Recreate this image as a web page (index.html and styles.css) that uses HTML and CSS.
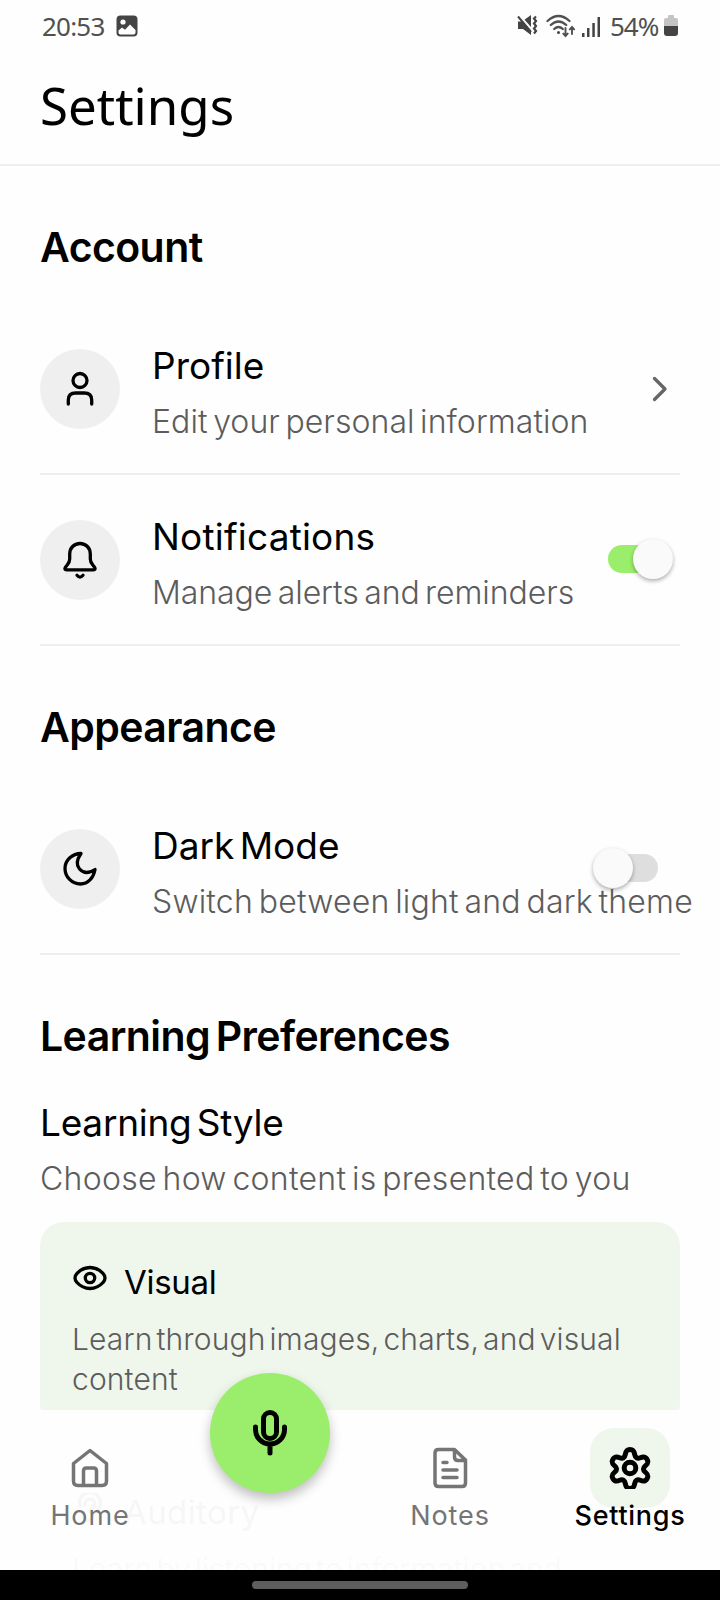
FILE: index.html
```html
<!DOCTYPE html>
<html lang="en">
<head>
<meta charset="utf-8">
<title>Settings</title>
<link rel="stylesheet" href="styles.css">
</head>
<body>
<div class="phone">
  <div class="status">
    <span class="clock">20:53</span>
    <svg class="photo" width="22" height="22" viewBox="0 0 22 22"><rect x=".5" y=".5" width="21" height="21" rx="4" fill="#444"/><circle cx="7" cy="7" r="2.6" fill="#fff"/><path d="M2.500 15.500 6 12.500l3 2.300 5-5.300 5.500 5.500v2.500q0 2-2 2h-13q-2 0-2-2z" fill="#fff"/></svg>
    <span class="spacer"></span>
    <svg class="mute" width="22" height="22" viewBox="0 0 22 22"><path d="M1 6.500h4L14 0v20l-8-6H1z" fill="#444"/><path d="M2 0 15.500 15.500" stroke="#fefefe" stroke-width="2.200"/><path d="M1 1.500 14 17" stroke="#444" stroke-width="2"/><path d="M19 1.500l-2 2 2 2.500-2 2.500 2 2.500-2 2.500 2 2.500-2 2.500" fill="none" stroke="#444" stroke-width="2.200"/></svg>
    <svg class="wifi" width="29" height="24" viewBox="0 0 29 24" fill="none" stroke="#505050" stroke-width="2.300" stroke-linecap="round"><path d="M1.500 7q11-10 22 0M4.800 11q7.700-7 15.400 0M8.200 15q4.300-4 8.600 0"/><circle cx="12.500" cy="18.500" r="1.500" fill="#444" stroke="none"/><path d="M19.500 14v8m-2.200-2.400 2.200 2.400 2.200-2.400M26 20v-7m-2.200 2.400L26 13l2.200 2.400" stroke-width="1.900"/></svg>
    <svg class="signal" width="19" height="21" viewBox="0 0 19 21" fill="#444"><rect x="0" y="16" width="2.500" height="4"/><rect x="5" y="11" width="2.500" height="9"/><rect x="10.300" y="6" width="2.500" height="14"/><rect x="15.500" y="0" width="2.500" height="20"/></svg>
    <span class="percent">54%</span>
    <svg class="battery" width="14" height="22" viewBox="0 0 14 22"><path d="M4 3V1q0-1 1-1h4q1 0 1 1v2h2q2 0 2 2v6H0V5q0-2 2-2z" fill="#c4c4c4"/><path d="M0 11h14v7q0 3-3 3H3q-3 0-3-3z" fill="#444"/></svg>
  </div>
  <header class="header"><h1 class="title">Settings</h1></header>

  <main class="content">
    <section>
      <h2 class="heading">Account</h2>
      <div class="row">
        <div class="avatar"><svg width="40" height="40" viewBox="0 0 40 40"><circle cx="20" cy="11.500" r="7"/><path d="M8.300 35v-4q0-7 7.500-7h8.400q7.500 0 7.500 7v4"/></svg></div>
        <div class="text"><div class="name">Profile</div><div class="desc d-profile">Edit your personal information</div></div>
        <svg class="chevron" width="16" height="26" viewBox="0 0 16 26"><path d="m2.500 2.500 10.500 10.500L2.500 23.500"/></svg>
      </div>
      <div class="row">
        <div class="avatar"><svg width="40" height="40" viewBox="0 0 40 40"><path d="M20 3.500c-6 0-10.300 4.500-10.300 10.500v5q0 3-2.500 6l-1.800 2.200q-1.400 2.600 1.100 2.600h27q2.500 0 1.100-2.600L32.800 25q-2.500-3-2.500-6v-5C30.300 8 26 3.500 20 3.500zM17 35.300q3 3.500 6 0"/></svg></div>
        <div class="text"><div class="name n-notif">Notifications</div><div class="desc d-notif">Manage alerts and reminders</div></div>
        <div class="switch switch-on"><span class="thumb"></span></div>
      </div>
    </section>
    <section>
      <h2 class="heading">Appearance</h2>
      <div class="row">
        <div class="avatar"><svg width="40" height="40" viewBox="0 0 40 40"><path d="M21 4.500C16.500 11 16 16 19.500 20c4 4.500 9.500 4.500 15.500.5C33.500 29 28 35 20.500 35 12 35 5 28 5 19.500 5 11 12.500 4.500 21 4.500z"/></svg></div>
        <div class="text"><div class="name">Dark Mode</div><div class="desc d-dark">Switch between light and dark theme</div></div>
        <div class="switch switch-off"><span class="thumb"></span></div>
      </div>
    </section>
    <section>
      <h2 class="heading">Learning Preferences</h2>
      <div class="style-intro"><div class="name n-style">Learning Style</div><div class="desc d-style">Choose how content is presented to you</div></div>
      <div class="card card-selected">
        <div class="card-head"><svg class="card-icon" width="34" height="26" viewBox="0 0 34 26"><path d="M2 13q0-2.500 2-4.500Q9.500 2.500 17 2.500T30 8.500q2 2 2 4.500t-2 4.500q-5.500 6-13 6t-13-6Q2 15.500 2 13z"/><circle cx="17" cy="13" r="4.700"/></svg><span class="card-name">Visual</span></div>
        <p class="card-desc">Learn through images, charts, and visual content</p>
      </div>
      <div class="card">
        <div class="card-head"><svg class="card-icon" width="34" height="30" viewBox="0 0 34 30"><path d="M7 13a10.500 10.500 0 1 1 20 0q-1 4-4 5.500-2 1-3 5-1 4-5 4-5 0-5-5M12 12a5 5 0 1 1 9 2q-4 1-4 5"/></svg><span class="card-name n-auditory">Auditory</span></div>
        <p class="card-desc">Learn by listening to information and discussions</p>
      </div>
    </section>
  </main>

  <nav class="nav">
    <div class="tab"><div class="tab-icon"><svg width="40" height="42" viewBox="0 0 40 42"><path d="M3.500 16.500 20 3.500l16.500 13V34q0 4.500-4.500 4.500H8q-4.500 0-4.500-4.500zM13.500 38V24q0-3 3-3h7q3 0 3 3v14"/></svg></div><span class="tab-label">Home</span></div>
    <div class="tab"></div>
    <div class="tab"><div class="tab-icon"><svg width="40" height="42" viewBox="0 0 40 42"><path d="M8.500 2.500h16L35.500 13v23q0 3.500-3.500 3.500H8.500Q5 39.500 5 36V6q0-3.500 3.500-3.500zM24.500 3v7q0 3.500 3.500 3.500h7M13 15.500h4M13 23h14M13 30.500h14"/></svg></div><span class="tab-label">Notes</span></div>
    <div class="tab tab-active"><div class="tab-icon"><svg width="42" height="42" viewBox="0 0 42 42"><circle cx="21" cy="21" r="5.800"/><path d="M21 2.500c3.500 0 4.200 2 4.700 5 .6 3.200 2.600 4.400 5.600 3.200 3-1.200 5-1.300 6.800 1.700 1.700 3 .5 4.600-1.800 6.500-2.500 2-2.500 4.200 0 6.200 2.300 1.900 3.500 3.500 1.800 6.500-1.800 3-3.800 2.900-6.800 1.700-3-1.200-5 0-5.600 3.200-.5 3-1.200 5-4.700 5s-4.200-2-4.700-5c-.6-3.200-2.600-4.400-5.600-3.200-3 1.200-5 1.300-6.800-1.700-1.700-3-.5-4.600 1.800-6.500 2.500-2 2.500-4.200 0-6.200C3.400 17 2.200 15.400 3.900 12.400c1.800-3 3.800-2.900 6.800-1.700 3 1.200 5 0 5.600-3.200.5-3 1.200-5 4.700-5z"/></svg></div><span class="tab-label">Settings</span></div>
  </nav>
  <div class="fab"><svg width="40" height="50" viewBox="0 0 40 50"><rect x="13.500" y="4.500" width="13" height="26" rx="6.500"/><path d="M5.500 19v2.500a14.500 14.500 0 0 0 29 0V19M20 37v8"/></svg></div>
  <div class="gesture"><span class="pill"></span></div>
</div>
</body>
</html>
```
FILE: styles.css
```css
* { box-sizing: border-box; }
body { margin: 0; background: #fff; font-family: Inter, "Liberation Sans", sans-serif; color: #000; }
h1, h2, p { margin: 0; }
.phone { position: relative; width: 720px; height: 1600px; overflow: hidden; background: #fefefe; }

.status { height: 52px; padding: 0 42px; display: flex; align-items: center; font-family: "Noto Sans", sans-serif; font-size: 26px; color: #505050; }
.clock { width: 62px; letter-spacing: -.8px; white-space: nowrap; }
.photo { margin-left: 12px; }
.spacer { flex: 1; }
.mute { margin-right: 1px; }
.wifi { margin-left: 6px; margin-top: -1px; }
.signal { margin-left: 7px; margin-top: 2px; }
.percent { margin-left: 9px; width: 51px; letter-spacing: -1px; white-space: nowrap; }
.battery { margin-left: 3px; }

.header { height: 114px; padding: 1px 40px 0; border-bottom: 2px solid #eee; }
.title { font-family: "Noto Sans", sans-serif; font-weight: 400; font-size: 51px; line-height: 105px; }

.heading { padding: 56px 40px 31px; font-size: 41px; line-height: 51px; font-weight: 600; letter-spacing: -.58px; word-spacing: -4px; white-space: nowrap; }
.row { height: 171px; margin: 0 40px; border-bottom: 2px solid #eee; display: flex; align-items: center; }
.avatar { flex: none; width: 80px; height: 80px; border-radius: 50%; background: #efefef; display: grid; place-items: center; }
.avatar svg { fill: none; stroke: #000; stroke-width: 3.300; stroke-linecap: round; stroke-linejoin: round; }
.text { flex: 1; min-width: 0; margin: 10px 0 0 32px; z-index: 1; }
.name, .desc { line-height: 56px; white-space: nowrap; }
.name { font-size: 37px; word-spacing: -5px; }
.n-notif { letter-spacing: .2px; }
.n-style { letter-spacing: -.25px; }
.desc { font-size: 32px; font-weight: 300; color: #5c5c5c; word-spacing: -3.500px; }
.d-profile { letter-spacing: .06px; }
.d-notif { letter-spacing: -.06px; }
.d-dark { letter-spacing: .2px; }
.d-style { letter-spacing: .27px; }
.chevron { flex: none; margin-right: 12px; fill: none; stroke: #666; stroke-width: 3.300; stroke-linecap: round; stroke-linejoin: round; }

.switch { flex: none; width: 65px; height: 28px; margin-top: -1px; border-radius: 14px; display: flex; align-items: center; }
.thumb { width: 40px; height: 40px; flex: none; border-radius: 50%; background: #fafafa; box-shadow: 0 2px 4px rgba(0,0,0,.32); }
.switch-on { margin-right: 7px; background: linear-gradient(90deg, #9bee6b 75%, transparent 75%); justify-content: flex-end; }
.switch-off { margin-right: 22px; background: linear-gradient(270deg, #dedede 75%, transparent 75%); }

.style-intro { margin: 2px 40px 15px; }
.card { height: 206px; margin: 0 40px 24px; padding: 32px; border-radius: 24px; }
.card-selected { background: #eff6ec; }
.card-head { height: 56px; display: flex; align-items: center; gap: 17px; margin-bottom: 10px; }
.card-icon { fill: none; stroke: #000; stroke-width: 3.300; stroke-linecap: round; margin: 0 0 8px 1px; }
.card-name { font-size: 33px; line-height: 56px; letter-spacing: -.3px; }
.n-auditory { letter-spacing: .4px; }
.card-desc { font-size: 30px; line-height: 39.500px; font-weight: 300; color: #5c5c5c; letter-spacing: .12px; word-spacing: -4.500px; }

.nav { position: absolute; left: 0; right: 0; top: 1410px; height: 160px; display: grid; grid-template-columns: repeat(4, 1fr); background: rgba(254,254,254,.97); }
.tab { display: flex; flex-direction: column; align-items: center; padding-top: 18px; color: #757575; }
.tab-icon { width: 80px; height: 80px; border-radius: 24px; display: grid; place-items: center; }
.tab-icon svg { fill: none; stroke: currentColor; stroke-width: 3.500; stroke-linecap: round; stroke-linejoin: round; }
.tab-active { color: #000; }
.tab-active .tab-icon { background: #eff6ec; }
.tab-active .tab-icon svg { stroke-width: 5; }
.tab-label { font-size: 27px; line-height: 32px; margin-top: -8px; letter-spacing: .9px; white-space: nowrap; }
.tab-active .tab-label { font-weight: 500; letter-spacing: .7px; }

.fab { position: absolute; left: 210px; top: 1373px; width: 120px; height: 120px; border-radius: 50%; background: #9bee6b; display: grid; place-items: center; box-shadow: 0 6px 12px rgba(0,0,0,.25); }
.fab svg { fill: none; stroke: #000; stroke-width: 5; stroke-linecap: round; }
.gesture { position: absolute; left: 0; right: 0; bottom: 0; height: 30px; background: #000; display: flex; justify-content: center; padding-top: 11px; }
.pill { width: 216px; height: 8px; border-radius: 4px; background: #5e5e5e; }
```
